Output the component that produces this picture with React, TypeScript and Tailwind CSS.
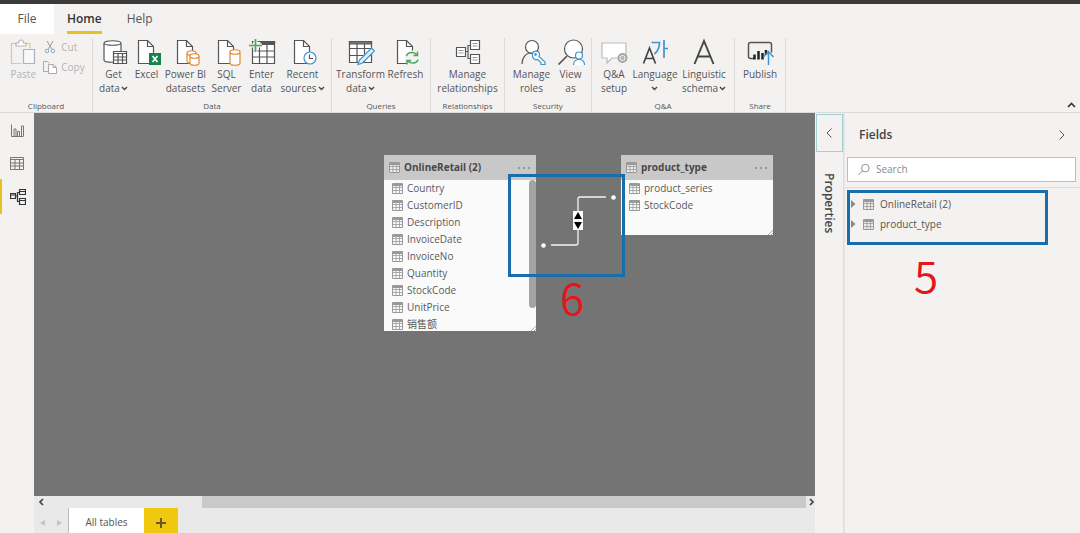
import { ReactNode } from "react";
import clsx from "clsx";

const ink = "#555";
const blue = "#3f94cf";
const orange = "#e08a35";
const green = "#4fa562";

const Icon = ({ children }: { children: ReactNode }) => (
  <svg width="28" height="28" viewBox="0 0 28 28" fill="none" stroke={ink} strokeWidth="1.2">
    {children}
  </svg>
);

const Page = () => (
  <>
    <path d="M5.5 2.5h9l6 6v17h-15z" fill="#fff" />
    <path d="M14.5 2.5v6h6" />
  </>
);

const Cylinder = ({ x, y, w, h }: { x: number; y: number; w: number; h: number }) => (
  <path
    d={`M${x} ${y}v${h}c0 3 ${w} 3 ${w} 0v-${h}c0 -3 -${w} -3 -${w} 0c0 3 ${w} 3 ${w} 0`}
    fill="#fff"
  />
);

const PasteIcon = () => (
  <Icon>
    <g stroke="#e3c68a">
      <path d="M7 5.500H2.500v20h10" />
      <path d="M17 5.500h4v5" />
    </g>
    <path d="M7 8V5h2.500c0-4 5-4 5 0H17v3z" fill="#fff" stroke="#b5b5b5" />
    <path d="M14.500 11.500h11v14h-11z" fill="#f8f8f8" stroke="#a9b4c2" />
  </Icon>
);

const DatabaseIcon = () => (
  <Icon>
    <Cylinder x={4} y={5} w={17} h={17} />
    <path d="M13.500 13.500h13v12h-13z" fill="#fff" />
    <path d="M13.500 15.500h13M13.500 19h13M13.500 22h13M18 15v10.500M22.500 15v10.500" />
  </Icon>
);

const ExcelIcon = () => (
  <Icon>
    <Page />
    <path d="M16 15h12v12H16z" fill="#17824a" stroke="none" />
    <path d="M19.500 18l5 6M24.500 18l-5 6" stroke="#fff" strokeWidth="1.700" />
  </Icon>
);

const DatasetsIcon = () => (
  <Icon>
    <Page />
    <g stroke={orange}>
      <Cylinder x={15} y={15} w={9} h={8} />
      <Cylinder x={18} y={18} w={9} h={7} />
    </g>
  </Icon>
);

const SqlIcon = () => (
  <Icon>
    <Page />
    <g stroke={orange}>
      <Cylinder x={17} y={14} w={10} h={11} />
    </g>
  </Icon>
);

const EnterIcon = () => (
  <Icon>
    <path d="M4.500 3.500h22v22h-22z" fill="#fff" />
    <path d="M4.500 6.500h22M4.500 13h22M4.500 19h22M11.500 6v19.500M19 6v19.500" />
    <path d="M13 3.500h13.500v2H13z" fill={ink} />
    <path d="M7.500 1v13M1 7.500h13" stroke="#f3f2f1" strokeWidth="4" />
    <path d="M7.500 1v13M1 7.500h13" stroke={green} strokeWidth="1.700" />
  </Icon>
);

const RecentIcon = () => (
  <Icon>
    <Page />
    <circle cx="21" cy="20" r="6" fill="#fff" stroke={blue} />
    <path d="M20.500 16.500v4h3.500" />
  </Icon>
);

const TransformIcon = () => (
  <Icon>
    <path d="M2.500 3.500h22v21h-22z" fill="#fff" />
    <path d="M2.500 10.500h22M2.500 17.500h22M10 6v18.500M17.500 6v18.500" />
    <path d="M2.500 3.500h22v2.500h-22z" fill="#777" />
    <path d="M24.500 10l3 3-12 12-4.500 1.500 1.500-4.500z" fill="#dceefa" stroke={blue} />
  </Icon>
);

const RefreshIcon = () => (
  <Icon>
    <path d="M5.500 2.500h9l6 6v17h-15z" fill="#fff" />
    <path d="M14.500 2.500v6h6" />
    <circle cx="20" cy="20" r="7.500" fill="#f3f2f1" stroke="none" />
    <path
      d="M14.500 18c1.500-4.500 8-4.500 10.500-1M25.500 13.500v4h-4M26 21.500c-1.500 4.500-8 4.500-10.500 1M15 26.500v-4h4"
      stroke={green}
      strokeWidth="1.500"
    />
  </Icon>
);

const RelationshipsIcon = () => (
  <Icon>
    <path d="M2.500 9.500h9v9h-9zM16.500 2.500h9v9h-9zM16.500 16.500h9v9h-9z" fill="#fff" />
    <path d="M11.500 13.500h2.500M16.500 7.500H14v13h2.500" />
    <path
      d="M4.500 12.500h5M4.500 15h5M18.500 5.500h5M18.500 8h5M18.500 19.500h5M18.500 22h5"
      stroke="#999"
      strokeWidth="1"
    />
  </Icon>
);

const RolesIcon = () => (
  <Icon>
    <circle cx="14" cy="9" r="6.500" fill="#fff" />
    <path d="M4 26c0-6 3.500-10 7-11h6" />
    <path
      d="M14.500 16.500c0-4.500 7-4.500 7 0 0 1-.3 1.500-.6 2l6.100 5.500v2.500h-4v-2l-3.500-3c-2.500.8-5-1-5-4z"
      fill="#fff"
      stroke={blue}
    />
    <circle cx="17.500" cy="16.500" r=".8" stroke={blue} />
  </Icon>
);

const ViewAsIcon = () => (
  <Icon>
    <circle cx="16.500" cy="11" r="9" fill="#fff" />
    <path d="M10 18l-8.500 8.500" strokeWidth="1.700" />
    <circle cx="22" cy="17.500" r="3.500" fill="#fff" stroke={blue} />
    <path d="M16.500 27c0-7.500 11-7.500 11 0" fill="#fff" stroke={blue} />
  </Icon>
);

const QnaIcon = () => (
  <Icon>
    <path d="M2 5h24v15H12l-5 5v-5H2z" fill="#fff" stroke="#bcbcbc" />
    <circle cx="22.500" cy="20" r="4" fill="#eee" stroke="#a5a5a5" strokeWidth="2" />
    <circle cx="22.500" cy="20" r="1.300" stroke="#a5a5a5" />
  </Icon>
);

const LanguageIcon = () => (
  <Icon>
    <path d="M2.500 25.500L8.500 10l6 15.500M4.800 20.500h7.500" stroke="#444" strokeWidth="1.700" />
    <path d="M10.500 4.500h8c0 5-2 9-5 11.500M23 2v18M23 10.500h4" stroke={blue} strokeWidth="1.700" />
  </Icon>
);

const LinguisticIcon = () => (
  <Icon>
    <path d="M4.500 26L14 3l9.500 23M8 18.500h12" stroke="#444" strokeWidth="1.900" />
  </Icon>
);

const PublishIcon = () => (
  <Icon>
    <path d="M8 20.500H4.500c-1 0-2-1-2-2v-12c0-1 1-2 2-2h19c1 0 2 1 2 2v8" strokeWidth="1.500" />
    <path d="M8.500 16.500v5M12.500 13v8.500M16.500 15v6.500M20 12v5" stroke="#222" strokeWidth="2.500" />
    <path d="M22.500 27V14M17.500 19l5-5.500 5 5.500" stroke={blue} strokeWidth="1.500" />
  </Icon>
);

const Caret = () => (
  <svg width="7" height="5" viewBox="0 0 7 5" fill="none" stroke="#444" strokeWidth="1.400" className="inline">
    <path d="M1 1l2.500 2.500L6 1" />
  </svg>
);

const TableIcon = ({ light = false }: { light?: boolean }) => (
  <svg width="11" height="11" viewBox="0 0 11 11" fill="none" stroke="#999" className="shrink-0">
    <path d="M.5.500h10v10H.5z" fill={light ? "#ececec" : "#f8f8f8"} />
    <path d="M.5 2h10" strokeWidth="2" />
    <path d="M.5 4.500h10M.5 7.500h10M4 2v8.500M7.500 2v8.500" strokeWidth=".8" />
  </svg>
);

interface IRibbonButton {
  lines: string[];
  width: string;
  icon: ReactNode;
  caret?: boolean;
}

const groups: { name: string; className: string; items: IRibbonButton[] }[] = [
  {
    name: "Data",
    className: "w-[239px]",
    items: [
      { lines: ["Get", "data"], width: "w-8", icon: <DatabaseIcon />, caret: true },
      { lines: ["Excel"], width: "w-8", icon: <ExcelIcon /> },
      { lines: ["Power BI", "datasets"], width: "w-11", icon: <DatasetsIcon /> },
      { lines: ["SQL", "Server"], width: "w-9", icon: <SqlIcon /> },
      { lines: ["Enter", "data"], width: "w-8", icon: <EnterIcon /> },
      { lines: ["Recent", "sources"], width: "w-12", icon: <RecentIcon />, caret: true },
    ],
  },
  {
    name: "Queries",
    className: "w-[99px]",
    items: [
      { lines: ["Transform", "data"], width: "w-12", icon: <TransformIcon />, caret: true },
      { lines: ["Refresh"], width: "w-10", icon: <RefreshIcon /> },
    ],
  },
  {
    name: "Relationships",
    className: "w-[74px]",
    items: [{ lines: ["Manage", "relationships"], width: "w-16", icon: <RelationshipsIcon /> }],
  },
  {
    name: "Security",
    className: "w-[87px]",
    items: [
      { lines: ["Manage", "roles"], width: "w-11", icon: <RolesIcon /> },
      { lines: ["View", "as"], width: "w-8", icon: <ViewAsIcon /> },
    ],
  },
  {
    name: "Q&A",
    className: "w-[143px]",
    items: [
      { lines: ["Q&A", "setup"], width: "w-8", icon: <QnaIcon /> },
      { lines: ["Language", ""], width: "w-12", icon: <LanguageIcon />, caret: true },
      { lines: ["Linguistic", "schema"], width: "w-12", icon: <LinguisticIcon />, caret: true },
    ],
  },
  {
    name: "Share",
    className: "w-[51px]",
    items: [{ lines: ["Publish"], width: "w-10", icon: <PublishIcon /> }],
  },
];

const RibbonButton = ({ lines, width, icon, caret }: IRibbonButton) => (
  <button className={clsx("flex flex-col items-center whitespace-nowrap", width)}>
    {icon}
    <span className="mt-px flex flex-col items-center text-[10px] leading-[14px]">
      {lines.map((line, i) => (
        <span key={i} className="flex items-center gap-px">
          {line}
          {caret && i === lines.length - 1 && (
            <span className="flex h-[14px] items-center">
              <Caret />
            </span>
          )}
        </span>
      ))}
    </span>
  </button>
);

const Ribbon = () => (
  <div className="flex h-[79px] shrink-0 border-b border-[#dcdbda] bg-[#f3f2f1] text-[#555]">
    <section className="mt-1 flex w-[93px] shrink-0 flex-col items-center justify-between border-r border-[#dcdbda]">
      <div className="flex gap-1 text-[#b3b3b3]">
        <button className="flex w-8 flex-col items-center text-[10px] leading-[14px]">
          <PasteIcon />
          <span className="mt-px">Paste</span>
        </button>
        <div className="flex flex-col gap-[6px] pt-[2px] text-[10px] leading-[14px]">
          <button className="flex items-center gap-1">
            <svg width="14" height="14" viewBox="0 0 14 14" fill="none" stroke="#999">
              <path d="M4 1l5 8.500M10 1L5 9.500" />
              <circle cx="4" cy="11" r="1.800" stroke="#8aaed0" />
              <circle cx="10" cy="11" r="1.800" stroke="#8aaed0" />
            </svg>
            Cut
          </button>
          <button className="flex items-center gap-1">
            <svg width="14" height="14" viewBox="0 0 14 14" fill="none" stroke="#aaa">
              <path d="M5.500 11.500h-5v-10h4l2 2" />
              <path d="M5.500 4.500h5l3 3v6h-8zM10 4.500v3h3.500" fill="#fff" />
            </svg>
            Copy
          </button>
        </div>
      </div>
      <h2 className="text-[8px] leading-[12px]">Clipboard</h2>
    </section>
    {groups.map((group) => (
      <section
        key={group.name}
        className={clsx(
          "mt-1 flex shrink-0 flex-col items-center justify-between border-r border-[#dcdbda]",
          group.className
        )}>
        <div className="flex items-start gap-px">
          {group.items.map((item) => (
            <RibbonButton key={item.lines[0]} {...item} />
          ))}
        </div>
        <h2 className="text-[8px] leading-[12px]">{group.name}</h2>
      </section>
    ))}
    <button aria-label="Collapse ribbon" className="mb-1 ml-auto mr-1 self-end">
      <svg width="9" height="6" viewBox="0 0 9 6" fill="none" stroke="#333" strokeWidth="1.700">
        <path d="M1 5l3.500-3.500L8 5" />
      </svg>
    </button>
  </div>
);

const TableCard = ({
  title,
  fields,
  className,
  scroll,
}: {
  title: string;
  fields: string[];
  className: string;
  scroll?: boolean;
}) => (
  <article className={clsx("absolute w-[152px] overflow-hidden bg-[#fafafa] text-[#5a5a5a]", className)}>
    <header className="flex h-[25px] items-center gap-1 bg-[#c8c8c8] px-[5px]">
      <TableIcon light />
      <h3 className="text-[10px] font-bold text-[#484848]">{title}</h3>
      <button aria-label="More options" className="ml-auto flex gap-[3px] pr-px">
        {[0, 1, 2].map((dot) => (
          <span key={dot} className="size-[2px] rounded-full bg-[#888]" />
        ))}
      </button>
    </header>
    <ul className="text-[10px] leading-[17px]">
      {fields.map((field) => (
        <li key={field} className="flex items-center gap-1 pl-2">
          <TableIcon />
          {field}
        </li>
      ))}
    </ul>
    {scroll && <div className="absolute right-0 top-[25px] h-[128px] w-[7px] rounded-full bg-[#a3a3a3]" />}
    <svg width="7" height="7" viewBox="0 0 7 7" fill="none" stroke="#999" className="absolute bottom-0 right-0">
      <path d="M2 7l5-5M5 7l2-2" strokeWidth=".8" />
    </svg>
  </article>
);

const Canvas = () => (
  <div className="relative min-h-0 flex-1 overflow-hidden bg-[#747474]">
    <TableCard
      title="OnlineRetail (2)"
      className="left-[350px] top-[42px] h-[176px]"
      scroll
      fields={[
        "Country",
        "CustomerID",
        "Description",
        "InvoiceDate",
        "InvoiceNo",
        "Quantity",
        "StockCode",
        "UnitPrice",
        "销售额",
      ]}
    />
    <TableCard
      title="product_type"
      className="left-[587px] top-[42px] h-[80px]"
      fields={["product_series", "StockCode"]}
    />
    <svg width="78" height="56" viewBox="0 0 78 56" fill="none" className="absolute left-[505px] top-[80px]">
      <path d="M12 52h25q2 0 2-2V6q0-2 2-2h26" stroke="#f2f2f2" strokeWidth="1.300" />
      <circle cx="4.500" cy="52.500" r="2.300" fill="#fff" />
      <circle cx="74.500" cy="4.500" r="2.300" fill="#fff" />
      <path d="M34 18h10v19H34z" fill="#fff" />
      <path d="M39 19l4 7h-8zM39 36l4-7h-8z" fill="#000" />
    </svg>
    <div className="absolute left-[474px] top-[61px] h-[103px] w-[117px] border-3 border-[#1a6dab]" />
    <span className="absolute left-[526px] top-[159px] font-['Noto_Sans_CJK_SC',sans-serif] text-[44px] font-[350] leading-[48px] text-[#e3161b]">
      6
    </span>
  </div>
);

const NavRail = () => (
  <nav className="flex w-[34px] shrink-0 flex-col items-stretch bg-[#f3f2f1]">
    <button aria-label="Report" className="flex h-[34px] items-center justify-center">
      <svg width="13" height="13" viewBox="0 0 13 13" fill="none" stroke="#777">
        <path d="M.5.500v12h12M3 5h2v7M3 5v7M6.500 12V7.500h2V12M10.500 12V2h2v10" />
      </svg>
    </button>
    <button aria-label="Data" className="flex h-[32px] items-center justify-center">
      <svg width="14" height="13" viewBox="0 0 14 13" fill="none" stroke="#777">
        <path d="M.5.500h13v12H.5zM.5 2.500h13M.5 6h13M.5 9h13M5 2v10.500M9.500 2v10.500" />
      </svg>
    </button>
    <button
      aria-label="Model"
      className="flex h-[35px] items-center justify-center border-l-2 border-[#e8c11c]">
      <svg width="16" height="16" viewBox="0 0 16 16" fill="none" stroke="#333" strokeWidth="1.200">
        <path d="M.5 4.500h5v5h-5zM9.500.500h6v5h-6zM9.500 9.500h6v6h-6z" />
        <path d="M.5 6h5M9.500 2.500h6M9.500 11.500h6M5.500 7h2M9.500 3.500h-2v9h2" />
      </svg>
    </button>
  </nav>
);

const BottomBar = () => (
  <div className="shrink-0 bg-[#e9e9e9]">
    <div className="flex h-3 items-center justify-between pl-1">
      <svg width="6" height="8" viewBox="0 0 6 8" fill="none" stroke="#444" strokeWidth="1.700">
        <path d="M5 1L2 4l3 3" />
      </svg>
      <div className="ml-[158px] h-full flex-1 bg-[#c9c9c9]" />
      <svg width="9" height="8" viewBox="0 0 9 8" fill="none" stroke="#444" strokeWidth="1.700">
        <path d="M4 1l3 3-3 3" />
      </svg>
    </div>
    <div className="flex h-[25px]">
      <div className="flex w-[34px] items-center justify-center gap-3 pt-1">
        <svg width="5" height="6" viewBox="0 0 5 6" fill="#c3c3c3">
          <path d="M5 0v6L0 3z" />
        </svg>
        <svg width="5" height="6" viewBox="0 0 5 6" fill="#c3c3c3">
          <path d="M0 0v6l5-3z" />
        </svg>
      </div>
      <button className="w-[76px] border-l border-[#bbb] bg-white pt-1 text-[10px] font-medium text-[#555]">
        All tables
      </button>
      <button aria-label="New layout" className="flex w-[34px] items-center justify-center bg-[#f0c80f] pt-1">
        <svg width="10" height="10" viewBox="0 0 10 10" fill="none" stroke="#6a5a20" strokeWidth="2">
          <path d="M5 0v10M0 5h10" />
        </svg>
      </button>
    </div>
  </div>
);

const Properties = () => (
  <aside className="flex w-[29px] shrink-0 flex-col items-center border-r border-[#dedddc] bg-[#f3f2f1]">
    <button
      aria-label="Expand properties"
      className="mt-px flex h-[38px] w-[27px] items-center justify-center border border-[#9fd0d2]">
      <svg width="6" height="10" viewBox="0 0 6 10" fill="none" stroke="#555">
        <path d="M5.500.500L1 5l4.500 4.500" />
      </svg>
    </button>
    <h2 className="mt-[21px] text-[12px] font-semibold leading-4 text-[#444] [writing-mode:vertical-rl]">
      Properties
    </h2>
  </aside>
);

const Fields = () => (
  <aside className="relative min-w-0 flex-1 border-l border-[#e8e7e6] bg-[#f3f2f1]">
    <header className="flex h-[44px] items-center justify-between pl-[14px] pr-[15px]">
      <h2 className="text-[12px] font-semibold text-[#444]">Fields</h2>
      <button aria-label="Collapse fields">
        <svg width="6" height="10" viewBox="0 0 6 10" fill="none" stroke="#555">
          <path d="M.5.500L5 5 .5 9.500" />
        </svg>
      </button>
    </header>
    <div className="border-b border-[#dedddc] pb-[5px] pl-[2px] pr-1">
      <label className="flex h-[25px] items-center gap-[6px] border border-[#bebebe] bg-white pl-[10px]">
        <svg width="13" height="13" viewBox="0 0 13 13" fill="none" stroke="#888">
          <circle cx="8" cy="5" r="4.200" />
          <path d="M5 8L.5 12.500" />
        </svg>
        <input
          type="text"
          aria-label="Search"
          placeholder="Search"
          className="w-full bg-transparent text-[10px] outline-none placeholder:text-[#8a8a8a]"
        />
      </label>
    </div>
    <ul className="pl-[6px] pt-[6px] text-[10px] leading-5 text-[#555]">
      {["OnlineRetail (2)", "product_type"].map((name) => (
        <li key={name} className="flex items-center gap-[7px]">
          <svg width="5" height="8" viewBox="0 0 5 8" fill="#8a8a8a">
            <path d="M0 0l4.500 4L0 8z" />
          </svg>
          <span className="flex items-center gap-[6px]">
            <TableIcon light />
            {name}
          </span>
        </li>
      ))}
    </ul>
    <div className="absolute left-[2px] top-[77px] h-[55px] w-[201px] border-3 border-[#1a6dab]" />
    <span className="absolute left-[69px] top-[137px] font-['Noto_Sans_CJK_SC',sans-serif] text-[44px] font-[350] leading-[48px] text-[#e3161b]">
      5
    </span>
  </aside>
);

export default function App() {
  return (
    <div className="flex h-screen flex-col overflow-hidden bg-[#f3f2f1] font-['Open_Sans','Noto_Sans_CJK_SC',sans-serif]">
      <div className="h-1 shrink-0 bg-[#3b3a39]" />
      <nav className="flex h-[30px] shrink-0 text-[12px] text-[#555]">
        <button className="w-[54px] bg-white">File</button>
        <button className="ml-[13px] border-b-3 border-[#e8c11c] pt-[3px] font-semibold text-[#333]">Home</button>
        <button className="ml-[25px]">Help</button>
      </nav>
      <Ribbon />
      <div className="flex min-h-0 flex-1">
        <NavRail />
        <main className="flex min-w-0 flex-[781] flex-col">
          <Canvas />
          <BottomBar />
        </main>
        <Properties />
        <div className="flex min-w-0 flex-[236]">
          <Fields />
        </div>
      </div>
    </div>
  );
}
